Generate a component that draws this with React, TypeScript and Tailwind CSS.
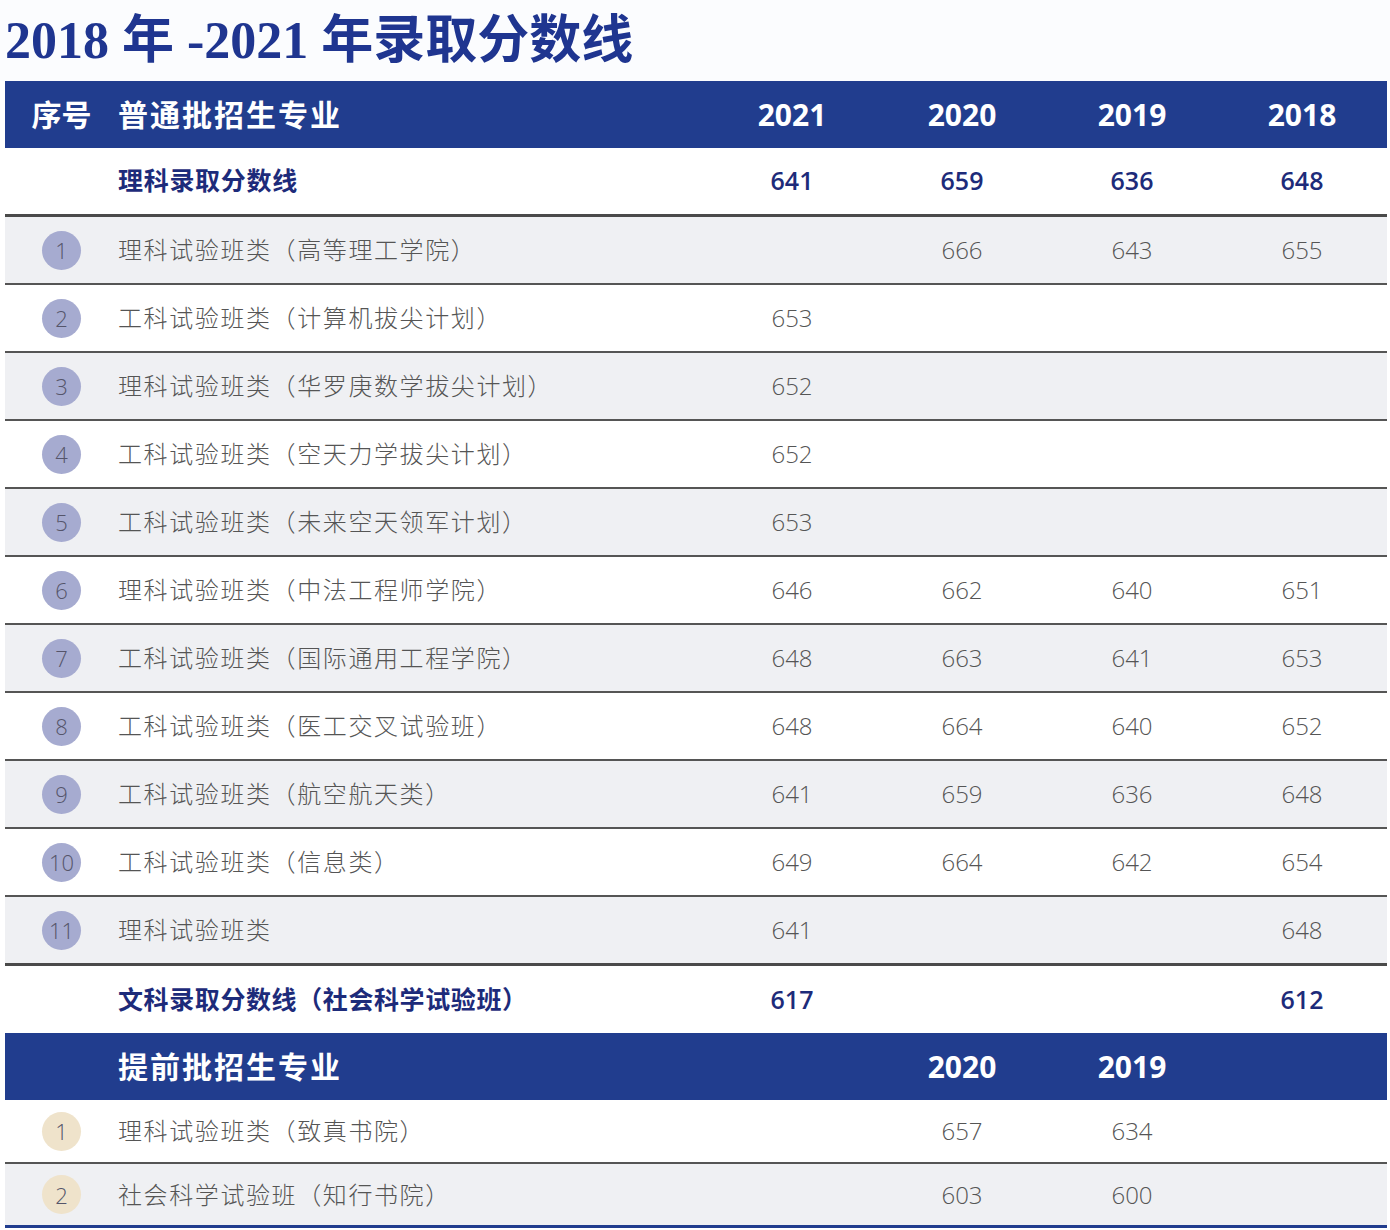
import React from 'react'

type Row = {
  name: string
  scores: (string | null)[]
}

const normalRows: Row[] = [
  { name: '理科试验班类（高等理工学院）', scores: [null, '666', '643', '655'] },
  { name: '工科试验班类（计算机拔尖计划）', scores: ['653', null, null, null] },
  { name: '理科试验班类（华罗庚数学拔尖计划）', scores: ['652', null, null, null] },
  { name: '工科试验班类（空天力学拔尖计划）', scores: ['652', null, null, null] },
  { name: '工科试验班类（未来空天领军计划）', scores: ['653', null, null, null] },
  { name: '理科试验班类（中法工程师学院）', scores: ['646', '662', '640', '651'] },
  { name: '工科试验班类（国际通用工程学院）', scores: ['648', '663', '641', '653'] },
  { name: '工科试验班类（医工交叉试验班）', scores: ['648', '664', '640', '652'] },
  { name: '工科试验班类（航空航天类）', scores: ['641', '659', '636', '648'] },
  { name: '工科试验班类（信息类）', scores: ['649', '664', '642', '654'] },
  { name: '理科试验班类', scores: ['641', null, null, '648'] },
]

const earlyRows: Row[] = [
  { name: '理科试验班类（致真书院）', scores: [null, '657', '634', null] },
  { name: '社会科学试验班（知行书院）', scores: [null, '603', '600', null] },
]

const grid = 'grid grid-cols-[113px_589px_170px_170px_170px_170px] items-center'
const font = { fontFamily: '"Open Sans", "Noto Sans CJK SC", sans-serif' }

function Badge({ n, beige }: { n: number; beige?: boolean }) {
  return (
    <div className="flex justify-center">
      <div
        className={`flex h-[39px] w-[39px] items-center justify-center rounded-full text-[22px] font-light leading-none text-[#55556a] ${
          beige ? 'bg-[#efe3cb]' : 'bg-[#a6abd0]'
        }`}
      >
        {n}
      </div>
    </div>
  )
}

export default function App() {
  return (
    <div className="min-h-[1230px] w-[1390px] bg-white" style={font}>
      {/* Title */}
      <div className="flex h-[81px] items-center bg-[#fbfcfe] pl-[5px]">
        <h1
          className="text-[52px] font-bold leading-none text-[#1f3590]"
          style={{ fontFamily: '"Liberation Serif", "Noto Sans CJK SC", serif' }}
        >
          2018 年 -2021 年录取分数线
        </h1>
      </div>

      <div className="ml-[5px] w-[1382px]">
        {/* Header */}
        <div className={`${grid} h-[67px] bg-[#213d8e] text-[30px] font-bold text-white`}>
          <div className="text-center">序号</div>
          <div className="tracking-[2px]">普通批招生专业</div>
          <div className="text-center">2021</div>
          <div className="text-center">2020</div>
          <div className="text-center">2019</div>
          <div className="text-center">2018</div>
        </div>

        {/* 理科 summary */}
        <div className={`${grid} h-[69px] border-b-[3px] border-[#4a4a4a] bg-white text-[25px] font-bold text-[#1d2b7a]`}>
          <div />
          <div className="tracking-[0.7px]">理科录取分数线</div>
          <div className="text-center font-semibold">641</div>
          <div className="text-center font-semibold">659</div>
          <div className="text-center font-semibold">636</div>
          <div className="text-center font-semibold">648</div>
        </div>

        {normalRows.map((row, i) => (
          <div
            key={row.name}
            className={`${grid} text-[24px] font-light text-[#555555] ${
              i % 2 === 0 ? 'bg-[#eff0f3]' : 'bg-white'
            } ${
              i === normalRows.length - 1
                ? 'h-[69px] border-b-[3px] border-[#4a4a4a]'
                : 'h-[68px] border-b-2 border-[#555555]'
            }`}
          >
            <Badge n={i + 1} />
            <div className="tracking-[1.6px]">{row.name}</div>
            {row.scores.map((s, j) => (
              <div key={j} className="text-center">
                {s}
              </div>
            ))}
          </div>
        ))}

        {/* 文科 summary */}
        <div className={`${grid} h-[67px] bg-white text-[25px] font-bold text-[#1d2b7a]`}>
          <div />
          <div className="tracking-[0.6px]">文科录取分数线（社会科学试验班）</div>
          <div className="text-center font-semibold">617</div>
          <div />
          <div />
          <div className="text-center font-semibold">612</div>
        </div>

        {/* Early batch header */}
        <div className={`${grid} h-[67px] bg-[#213d8e] text-[30px] font-bold text-white`}>
          <div />
          <div className="tracking-[2px]">提前批招生专业</div>
          <div />
          <div className="text-center">2020</div>
          <div className="text-center">2019</div>
          <div />
        </div>

        {earlyRows.map((row, i) => (
          <div
            key={row.name}
            className={`${grid} text-[24px] font-light text-[#555555] ${
              i === 0
                ? 'h-[64px] border-b-2 border-[#555555] bg-white'
                : 'h-[64px] border-b-[3px] border-[#213d8e] bg-[#eff0f3]'
            }`}
          >
            <Badge n={i + 1} beige />
            <div className="tracking-[1.6px]">{row.name}</div>
            {row.scores.map((s, j) => (
              <div key={j} className="text-center">
                {s}
              </div>
            ))}
          </div>
        ))}
      </div>
    </div>
  )
}
